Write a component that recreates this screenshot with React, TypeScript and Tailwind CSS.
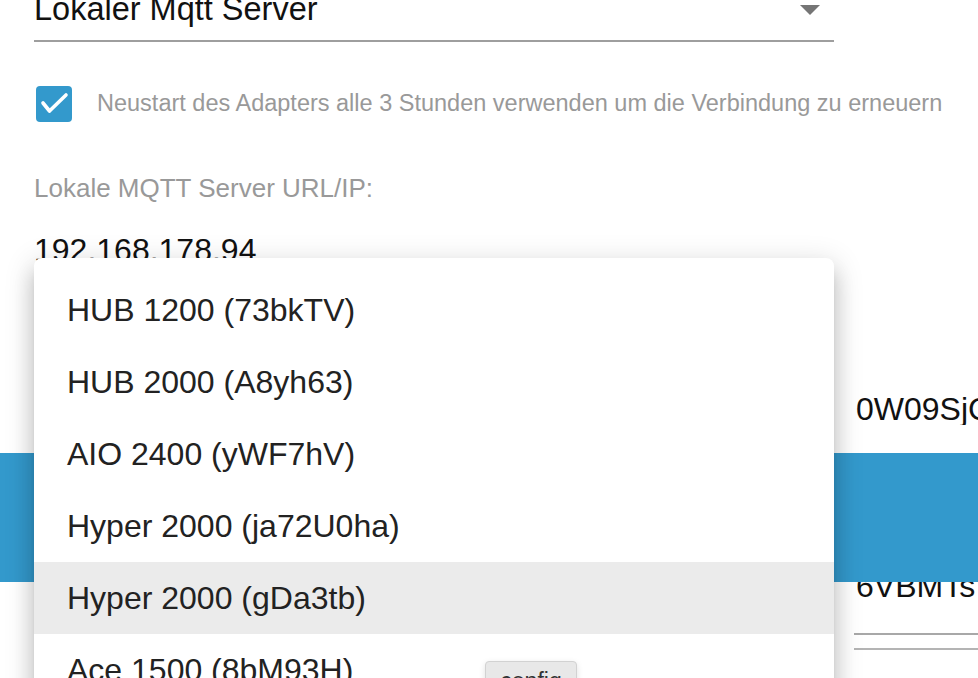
import React from 'react'

const items = [
  'HUB 1200 (73bkTV)',
  'HUB 2000 (A8yh63)',
  'AIO 2400 (yWF7hV)',
  'Hyper 2000 (ja72U0ha)',
  'Hyper 2000 (gDa3tb)',
  'Ace 1500 (8bM93H)',
]

const selected = 'Hyper 2000 (gDa3tb)'

export default function App() {
  return (
    <div className="relative h-[678px] w-full overflow-hidden bg-white font-['Liberation_Sans',Arial,sans-serif]">
      {/* Form content (scrolled) */}
      <div className="flex">
        <div className="w-[834px] shrink-0 pl-[34px]">
          {/* Select */}
          <div className="flex h-[42px] items-start justify-between border-b-2 border-[#9e9e9e]">
            <span className="-mt-[7px] text-[32.5px] leading-[32px] text-[#111]">
              Lokaler Mqtt Server
            </span>
            <span className="mr-[14px] mt-[5px] h-0 w-0 border-x-[10px] border-t-[10px] border-x-transparent border-t-[#757575]" />
          </div>

          {/* Checkbox */}
          <div className="mt-[44px] flex items-center">
            <div className="ml-[2px] flex h-[36px] w-[36px] items-center justify-center rounded-[4px] bg-[#3399cc]">
              <svg width="36" height="36" viewBox="0 0 36 36" fill="none">
                <polyline
                  points="7,17 13.5,25 30,9"
                  stroke="white"
                  strokeWidth="3.6"
                  strokeLinecap="round"
                  strokeLinejoin="round"
                />
              </svg>
            </div>
            <span className="ml-[25px] whitespace-nowrap text-[23.5px] leading-[23.5px] text-[#999]">
              Neustart des Adapters alle 3 Stunden verwenden um die Verbindung zu erneuern
            </span>
          </div>

          {/* URL field */}
          <div className="mt-[53px] text-[26px] leading-[26px] text-[#999]">
            Lokale MQTT Server URL/IP:
          </div>
          <div className="mt-[33px] text-[32px] leading-[32px] text-[#111]">
            192.168.178.94
          </div>
        </div>

        {/* Right column */}
        <div className="min-w-0 flex-1 pl-[20px]">
          <div className="mt-[393px] overflow-hidden whitespace-nowrap pl-[2px] text-[32px] leading-[32px] text-[#111]">
            0W09SjC8kQ
          </div>
          <div className="mt-[145px] overflow-hidden whitespace-nowrap pl-[2px] text-[32px] leading-[32px] text-[#111]">
            6VBMTs
          </div>
          <div className="mt-[31px] border-t-2 border-[#a8a8a8]" />
          <div className="mt-[13px] border-t-2 border-[#b4b4b4]" />
        </div>
      </div>

      {/* Sticky blue bar over content */}
      <div className="absolute left-0 right-0 top-[453px] h-[129px] bg-[#3399cc]" />

      {/* Open dropdown menu */}
      <div className="absolute left-[34px] top-[258px] w-[800px] rounded-[8px] bg-white pt-[16px] shadow-[0_10px_10px_-6px_rgba(0,0,0,0.2),0_16px_20px_2px_rgba(0,0,0,0.14),0_6px_28px_4px_rgba(0,0,0,0.12)]">
        {items.map((item) => (
          <div
            key={item}
            className={`flex h-[72px] items-center pl-[33px] text-[32px] leading-[48px] text-[#222] ${
              item === selected ? 'bg-[#ebebeb]' : ''
            }`}
          >
            {item}
          </div>
        ))}
      </div>

      {/* config button */}
      <div className="absolute left-[485px] top-[661px] h-[40px] w-[92px] rounded-[4px] border border-[#d2d2d2] bg-[#e8e8e8] pt-[8px] text-center text-[23px] leading-[23px] text-[#333] shadow-[0_2px_6px_rgba(0,0,0,0.12)]">
        config
      </div>
    </div>
  )
}
